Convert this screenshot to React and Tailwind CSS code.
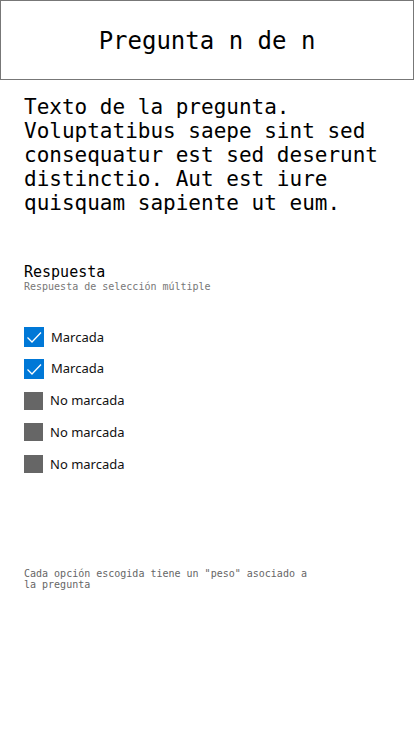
const opciones = [
  { label: "Marcada", checked: true },
  { label: "Marcada", checked: true },
  { label: "No marcada", checked: false },
  { label: "No marcada", checked: false },
  { label: "No marcada", checked: false },
];

const Check = () => (
  <svg width="20" height="20" viewBox="0 0 20 20" fill="none">
    <path d="M3.5 10.5 L8 15 L17 5.5" stroke="white" strokeWidth="1.3" />
  </svg>
);

const App = () => {
  return (
    <div className="w-[414px] min-h-[736px] bg-white font-['DejaVu_Sans_Mono',monospace] text-black">
      {/* Cabecera */}
      <header className="h-[80px] border border-[#777] flex items-center justify-center">
        <h1 className="text-[24px] leading-none mt-[2px]">Pregunta n de n</h1>
      </header>

      {/* Texto de la pregunta */}
      <p className="px-6 pt-[15px] text-[21px] leading-[24px]">
        Texto de la pregunta. Voluptatibus saepe sint sed consequatur est sed deserunt distinctio. Aut est iure quisquam sapiente ut eum.
      </p>

      {/* Respuesta */}
      <section className="px-6 pt-[48px]">
        <h2 className="text-[15px] leading-[18px]">Respuesta</h2>
        <p className="text-[10px] leading-[12px] text-[#777]">Respuesta de selección múltiple</p>

        <ul className="mt-[34px] flex flex-col gap-[11.75px] font-['Noto_Sans',sans-serif]">
          {opciones.map((o, i) => (
            <li key={i} className="flex items-center gap-[7px] h-[20px]">
              {o.checked ? (
                <span className="w-[20px] h-[20px] bg-[#0078d7] flex items-center justify-center">
                  <Check />
                </span>
              ) : (
                <span className="w-[19px] h-[18px] bg-[#666]" />
              )}
              <span className="text-[13px] leading-none text-[#111]">{o.label}</span>
            </li>
          ))}
        </ul>
      </section>

      {/* Nota */}
      <p className="px-6 pt-[94px] w-[340px] text-[10px] leading-[11px] text-[#666]">
        Cada opción escogida tiene un "peso" asociado a la pregunta
      </p>
    </div>
  );
};

export default App;
